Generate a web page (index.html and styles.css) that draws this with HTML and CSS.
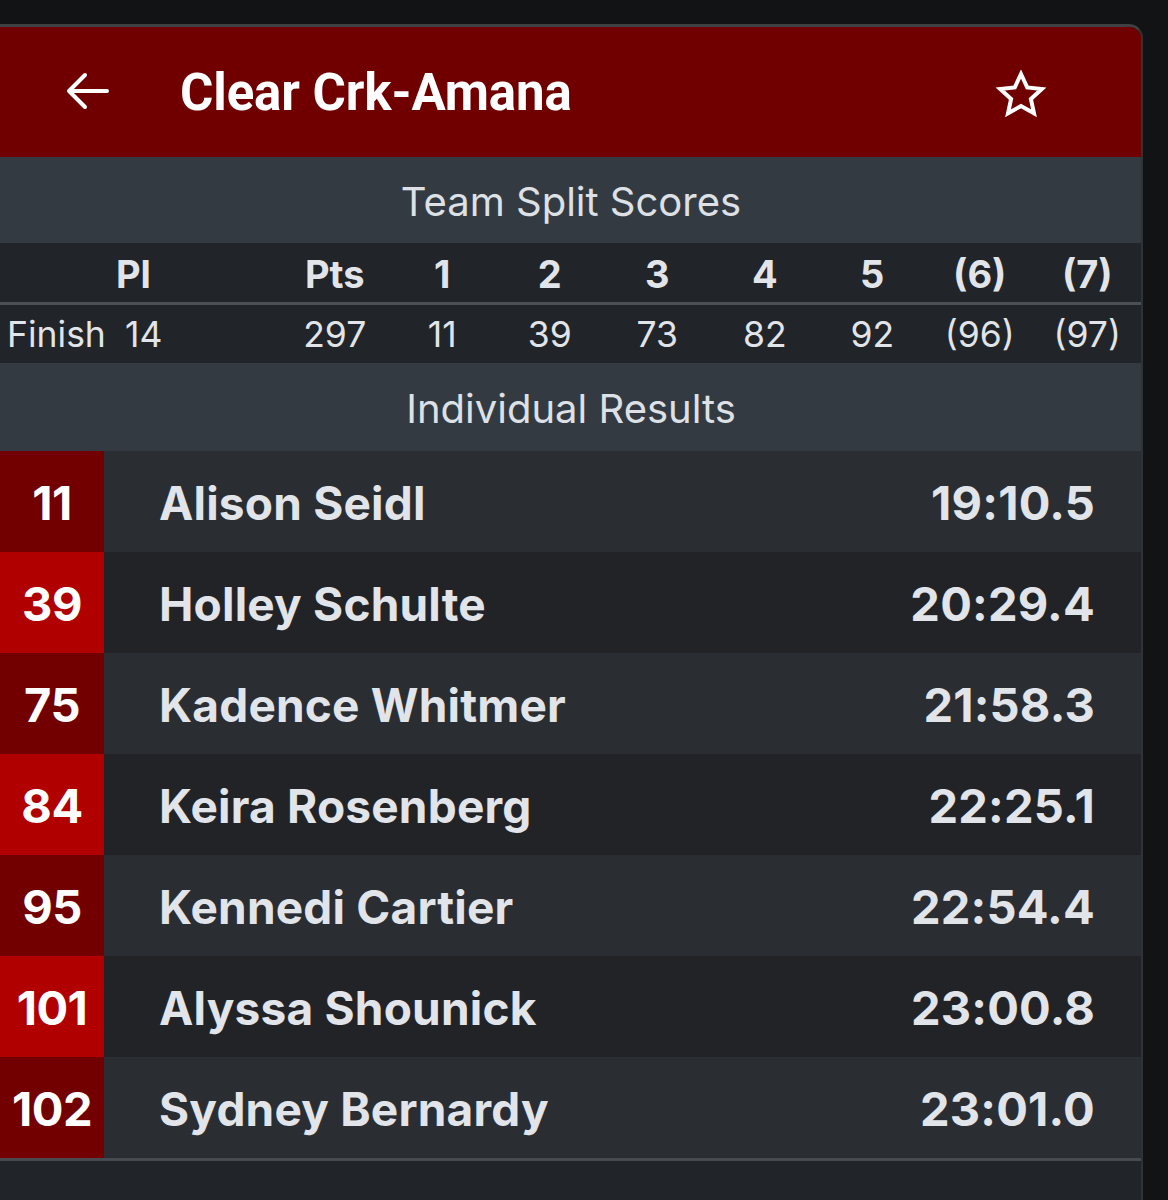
FILE: index.html
```html
<!DOCTYPE html>
<html lang="en">
<head>
<meta charset="utf-8">
<title>Clear Crk-Amana</title>
<link rel="stylesheet" href="styles.css">
</head>
<body>
<div class="card">
  <header class="topbar">
    <svg class="back" width="44" height="38" viewBox="0 0 44 38" aria-hidden="true">
      <path d="M41 19H4M19 3L3 19l16 16" fill="none" stroke="#fff" stroke-width="4" stroke-linecap="round" stroke-linejoin="round"/>
    </svg>
    <h1 class="title">Clear Crk-Amana</h1>
    <svg class="star" width="52" height="50" viewBox="0 0 52 50" aria-hidden="true">
      <path d="M26 4l6.2 13.4 14.6 1.6-10.9 9.9 3.1 14.4L26 36l-13 7.3 3.1-14.4L5.2 19l14.6-1.6z" fill="none" stroke="#fff" stroke-width="4" stroke-linejoin="miter"/>
    </svg>
  </header>

  <div class="band">Team Split Scores</div>

  <div class="split">
    <div class="srow head">
      <span></span>
      <span class="pl-h">Pl</span>
      <span></span>
      <span>Pts</span><span>1</span><span>2</span><span>3</span><span>4</span><span>5</span><span>(6)</span><span>(7)</span>
    </div>
    <div class="srow data">
      <span class="lbl">Finish</span>
      <span class="pl-d">14</span>
      <span></span>
      <span>297</span><span>11</span><span>39</span><span>73</span><span>82</span><span>92</span><span>(96)</span><span>(97)</span>
    </div>
  </div>

  <div class="band band-b">Individual Results</div>

  <div class="results">
    <div class="rrow odd"><span class="place">11</span><span class="name">Alison Seidl</span><span class="time">19:10.5</span></div>
    <div class="rrow even"><span class="place">39</span><span class="name">Holley Schulte</span><span class="time">20:29.4</span></div>
    <div class="rrow odd"><span class="place">75</span><span class="name">Kadence Whitmer</span><span class="time">21:58.3</span></div>
    <div class="rrow even"><span class="place">84</span><span class="name">Keira Rosenberg</span><span class="time">22:25.1</span></div>
    <div class="rrow odd"><span class="place">95</span><span class="name">Kennedi Cartier</span><span class="time">22:54.4</span></div>
    <div class="rrow even"><span class="place">101</span><span class="name">Alyssa Shounick</span><span class="time">23:00.8</span></div>
    <div class="rrow odd"><span class="place">102</span><span class="name">Sydney Bernardy</span><span class="time">23:01.0</span></div>
  </div>
  <div class="footer"></div>
</div>
</body>
</html>
```

FILE: styles.css
```css
* { box-sizing: border-box; }
html, body { margin: 0; padding: 0; }
body {
  background: #111315;
  font-family: Inter, "Noto Sans", sans-serif;
  color: #e1e4e9;
  height: 1200px;
  overflow: hidden;
}
.card {
  width: 1143px;
  margin-top: 24px;
  border-top: 3px solid #3e4043;
  border-right: 2px solid #2f3236;
  border-top-right-radius: 14px;
  overflow: hidden;
  background: #212428;
}
.topbar {
  height: 130px;
  background: #700000;
  display: flex;
  align-items: center;
}
.back { margin-left: 66px; margin-top: -2px; }
.title {
  margin: 0 0 0 70px;
  font-family: Roboto, "Liberation Sans", sans-serif;
  font-weight: 700;
  font-size: 51px;
  color: #fff;
  letter-spacing: -0.1px;
}
.star { margin-left: auto; margin-right: 94px; margin-top: 5px; }

.band {
  height: 86px;
  background: #343a42;
  display: flex;
  align-items: center;
  justify-content: center;
  font-size: 40px;
  font-weight: 400;
  color: #dde1e6;
  padding-left: 1px;
  padding-top: 3px;
}
.band-b { height: 88px; }
.split { background: #212428; }
.srow {
  display: grid;
  grid-template-columns: 113px 60px 1fr repeat(8, 107.5px);
  align-items: center;
  text-align: center;
}
.srow.head {
  height: 62px;
  font-weight: 700;
  font-size: 38px;
  border-bottom: 3px solid #4b4f56;
  padding-top: 2px;
}
.srow.data {
  height: 58px;
  font-weight: 400;
  font-size: 35.5px;
}
.lbl { text-align: left; padding-left: 7px; }
.pl-h { text-align: left; padding-left: 3px; }
.pl-d { text-align: left; padding-left: 12px; }

.rrow {
  height: 101px;
  display: grid;
  grid-template-columns: 104px 1fr auto;
  align-items: stretch;
}
.rrow.odd { background: #2a2d32; }
.rrow.even { background: #212327; }
.place {
  display: flex;
  align-items: center;
  justify-content: center;
  color: #fff;
  font-weight: 700;
  font-size: 47px;
  letter-spacing: -0.5px;
  padding-top: 2px;
}
.odd .place { background: #720000; }
.even .place { background: #b00000; }
.name {
  display: flex;
  align-items: center;
  padding-left: 55px;
  font-weight: 700;
  font-size: 46px;
  letter-spacing: 0.2px;
  padding-top: 2px;
}
.time {
  display: flex;
  align-items: center;
  padding-right: 46px;
  font-weight: 700;
  font-size: 47px;
  letter-spacing: 0.2px;
  padding-top: 2px;
}
.footer {
  border-top: 3px solid #474b51;
  height: 60px;
  background: #212428;
}
```
